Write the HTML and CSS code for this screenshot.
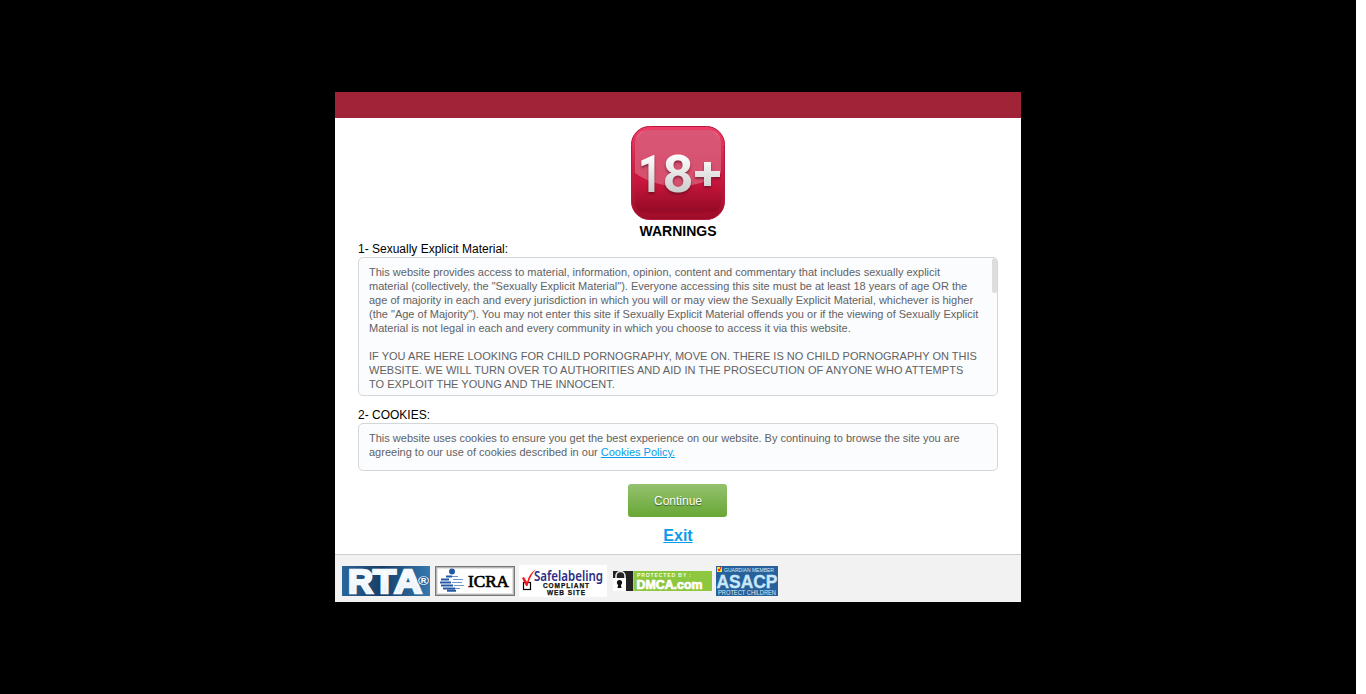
FILE: index.html
```html
<!DOCTYPE html>
<html lang="en">
<head>
<meta charset="utf-8">
<title>Warnings</title>
<link rel="stylesheet" href="styles.css">
</head>
<body>
<div class="backdrop">
<main class="dialog">
  <div class="bar"></div>
  <section class="content">
    <svg class="badge" width="94" height="94" viewBox="0 0 94 94" role="img">
      <defs>
        <linearGradient id="rim" x2="0" y2="1"><stop stop-color="#ed3e69"/><stop offset=".5" stop-color="#c91d43"/><stop offset="1" stop-color="#9c0c29"/></linearGradient>
        <linearGradient id="face" x2="0" y2="1"><stop stop-color="#cc1f49"/><stop offset=".6" stop-color="#c8163c"/><stop offset=".93" stop-color="#970b27"/><stop offset="1" stop-color="#a80f2d"/></linearGradient>
        <linearGradient id="silver" x1="0" y1="28" x2="0" y2="68" gradientUnits="userSpaceOnUse"><stop stop-color="#fff"/><stop offset="1" stop-color="#c9c9c9"/></linearGradient>
      </defs>
      <rect x=".5" y=".5" width="93" height="93" rx="18" fill="url(#rim)" stroke="#b5183b"/>
      <rect x="4" y="4" width="86" height="86" rx="15" fill="url(#face)"/>
      <path d="M4 47V19Q4 4 19 4H75Q90 4 90 19V47Q72 60 47 60T4 47Z" fill="#fff" opacity=".25"/>
      <g class="age"><text x="7" y="66" textLength="24" lengthAdjust="spacingAndGlyphs">1</text><text x="31.500" y="66" textLength="31" lengthAdjust="spacingAndGlyphs">8</text><path d="M73 36h7v9h9v6h-9v9h-7v-9h-9v-6h9z"/></g>
    </svg>
    <h1>WARNINGS</h1>
    <h2>1- Sexually Explicit Material:</h2>
    <div class="box terms">
      <p>This website provides access to material, information, opinion, content and commentary that includes sexually explicit<br>material (collectively, the "Sexually Explicit Material"). Everyone accessing this site must be at least 18 years of age OR the<br>age of majority in each and every jurisdiction in which you will or may view the Sexually Explicit Material, whichever is higher<br>(the "Age of Majority"). You may not enter this site if Sexually Explicit Material offends you or if the viewing of Sexually Explicit<br>Material is not legal in each and every community in which you choose to access it via this website.</p>
      <p class="notice">IF YOU ARE HERE LOOKING FOR CHILD PORNOGRAPHY, MOVE ON. THERE IS NO CHILD PORNOGRAPHY ON THIS<br><span class="wide">WEBSITE. WE WILL TURN OVER TO AUTHORITIES AND AID IN THE PROSECUTION OF ANYONE WHO ATTEMPTS</span><br>TO EXPLOIT THE YOUNG AND THE INNOCENT.</p>
      <span class="thumb"></span>
    </div>
    <h2>2- COOKIES:</h2>
    <div class="box cookies">
      <p>This website uses cookies to ensure you get the best experience on our website. By continuing to browse the site you are<br>agreeing to our use of cookies described in our <a href="#">Cookies Policy.</a></p>
    </div>
    <button class="continue">Continue</button>
    <a class="exit" href="#">Exit</a>
  </section>
  <footer class="labels">
    <svg class="rta" width="88" height="30" viewBox="0 0 88 30">
      <defs><linearGradient id="sea"><stop stop-color="#2a6599"/><stop offset=".45" stop-color="#173d66"/><stop offset="1" stop-color="#3479b0"/></linearGradient>
      <linearGradient id="ice" x2="0" y2="1"><stop offset=".3" stop-color="#fff"/><stop offset="1" stop-color="#dceaf5"/></linearGradient></defs>
      <rect width="88" height="30" fill="url(#sea)"/>
      <text class="rta-name" x="6" y="27" textLength="25" lengthAdjust="spacingAndGlyphs">R</text>
      <text class="rta-name" x="31" y="27" textLength="23" lengthAdjust="spacingAndGlyphs">T</text>
      <text class="rta-name" x="52" y="27" textLength="28" lengthAdjust="spacingAndGlyphs">A</text>
      <text class="reg" x="76" y="18.500" textLength="11" lengthAdjust="spacingAndGlyphs">®</text>
    </svg>
    <svg class="icra" width="80" height="30" viewBox="0 0 80 30">
      <rect width="80" height="30" fill="#777"/><rect x="1" y="1" width="78" height="28" fill="#b5b5b5"/><rect x="2" y="2" width="76" height="26" fill="#e4e4e4"/><rect x="3" y="3" width="74" height="24" fill="#fff"/>
      <circle cx="17" cy="5.500" r="3" fill="#2459a6"/>
      <path d="M11 10.500h6M6 13.500h8M5 16.500h11M6 19.500h12M8 22.500h12M12 24.800h9" stroke="#2459a6" stroke-width="1.900"/>
      <path d="M17 10.500h6M18 13.500h10M17 16.500h10M19 19.500h10M20 22.500h5" stroke="#6f97cf" stroke-width="1"/>
      <text class="icra-name" x="33" y="20.500" textLength="41" lengthAdjust="spacingAndGlyphs">ICRA</text>
    </svg>
    <svg class="safe" width="88" height="32" viewBox="0 0 88 32">
      <rect width="88" height="32" fill="#fff"/>
      <rect x="4.500" y="17.500" width="7" height="7" fill="none" stroke="#000" stroke-width="1.200"/>
      <path d="M3 13l2-1 3 5Q10 9 17 4 11 11 8.500 21H7Z" fill="#f01820"/>
      <text class="safe-name" x="15" y="15.500" textLength="69" lengthAdjust="spacingAndGlyphs">Safelabeling</text>
      <text class="safe-small" x="24" y="23" textLength="46">COMPLIANT</text>
      <text class="safe-small" x="28" y="30" textLength="38">WEB SITE</text>
    </svg>
    <svg class="dmca" width="99" height="20" viewBox="0 0 99 20">
      <rect width="21" height="20" fill="#232323"/><rect x="21" width="78" height="20" fill="#8dc63f"/><path d="M20.500 0v20" stroke="#fff" stroke-width=".7"/>
      <path d="M3 8V5a4.500 4.500 0 0 1 9 0v3" fill="none" stroke="#e8e8e8" stroke-width="1.600"/><path d="M0 7h13v13H0z" fill="#fff"/><circle cx="6.500" cy="11.500" r="2.600" fill="#111"/><path d="M5.500 12h2l1 5h-4z" fill="#111"/>
      <text class="dmca-top" x="24" y="6" textLength="54">PROTECTED BY :</text>
      <text class="dmca-name" x="23.500" y="17.800" textLength="66" lengthAdjust="spacingAndGlyphs">DMCA.com</text>
    </svg>
    <svg class="asacp" width="62" height="30" viewBox="0 0 62 30">
      <rect width="62" height="30" fill="#27609a"/>
      <rect x="1" y="1" width="5" height="5" fill="#ffe21a"/><path d="M2 3l1 2 2-4" fill="none" stroke="#e00" stroke-width="1"/>
      <text class="asacp-small" x="8" y="6" textLength="50" lengthAdjust="spacingAndGlyphs">GUARDIAN MEMBER</text>
      <text class="asacp-name" x=".5" y="21.500" textLength="61" lengthAdjust="spacingAndGlyphs">ASACP</text>
      <text class="asacp-small big" x="2" y="28.800" textLength="58" lengthAdjust="spacingAndGlyphs">PROTECT CHILDREN</text>
    </svg>
  </footer>
</main>
</div>
</body>
</html>
```

FILE: styles.css
```css
* { box-sizing: border-box; }
body { margin: 0; background: #fff; font-family: "Liberation Sans", Arial, sans-serif; overflow: hidden; }
.backdrop { width: 1356px; height: 694px; background: #000; display: flex; justify-content: center; align-items: center; }
.dialog { width: 686px; height: 510px; background: #fff; display: flex; flex-direction: column; }
.bar { height: 26px; background: #a02337; }
.content { flex: 1; padding: 8px 23px 0; display: flex; flex-direction: column; align-items: center; }
.badge { flex: none; display: block; }
h1 { margin: 3px 0 2px; font-size: 14px; line-height: 17px; color: #000; }
h2 { align-self: stretch; margin: 0; font-size: 12px; line-height: 15px; font-weight: 400; color: #000; }
.box { position: relative; width: 640px; border: 1px solid #d5d6d8; border-radius: 5px; background: #fbfcfe; padding: 7px 10px; font-size: 11px; line-height: 14px; color: #626262; white-space: nowrap; }
.box p { margin: 0 0 14px; }
.box .notice { letter-spacing: .015px; }
.wide { letter-spacing: .045px; }
.terms { height: 139px; margin-bottom: 12px; overflow: hidden; }
.cookies { height: 48px; margin-bottom: 13px; }
.thumb { position: absolute; top: 0; right: 0; width: 5px; height: 35px; border-radius: 5px; background: #ddd; }
a { color: #0a9ceb; }
.continue { width: 99px; height: 33px; margin-right: 1px; padding: 0 0 0 1px; border: 0; border-radius: 3px; background: linear-gradient(#95c16f, #67a735); color: #fff; font: 12px "Liberation Sans", Arial, sans-serif; text-shadow: 0 1px 1px #35601a; }
.exit { margin-top: 10px; font-size: 16px; line-height: 18px; font-weight: 700; }
.labels { height: 48px; border-top: 1px solid #ccc; background: #f2f2f2; display: flex; align-items: flex-start; padding: 10px 7px 0; }
.labels svg { flex: none; display: block; }
.rta, .icra, .asacp { margin-top: 1px; }
.icra { margin-left: 5px; }
.safe { margin-left: 4px; }
.dmca { margin: 6px 4px 0 6px; }
.age { font: 700 52px Roboto, sans-serif; fill: url(#silver); filter: drop-shadow(0 2px 1px rgba(90, 10, 30, .6)); }
.rta-name { font: 700 34px "Liberation Sans", sans-serif; fill: url(#ice); stroke: #f2f8fd; stroke-width: 2.4px; }
.reg { font: 700 13px "Liberation Sans", sans-serif; fill: #fff; stroke: #28659b; stroke-width: 1.5px; paint-order: stroke; }
.icra-name { font: 400 17px "Liberation Serif", serif; fill: #000; stroke: #000; stroke-width: .7px; }
.safe-name { font: 600 13.5px "Noto Sans", sans-serif; fill: #2d2d86; }
.safe-small { font: 700 6.5px "Liberation Sans", sans-serif; fill: #111; stroke: #111; stroke-width: .25px; }
.dmca-top { font: 700 5px "Liberation Sans", sans-serif; fill: #f2ffe0; }
.dmca-name { font: 700 12px "Liberation Sans", sans-serif; fill: #fff; stroke: #fff; stroke-width: .7px; }
.asacp-small { font: 5.5px "Liberation Sans", sans-serif; fill: #dce9f4; }
.asacp-small.big { font-size: 6.5px; }
.asacp-name { font: 700 19px "Liberation Sans", sans-serif; fill: #c8e8fb; stroke: #c8e8fb; stroke-width: .3px; }
```
